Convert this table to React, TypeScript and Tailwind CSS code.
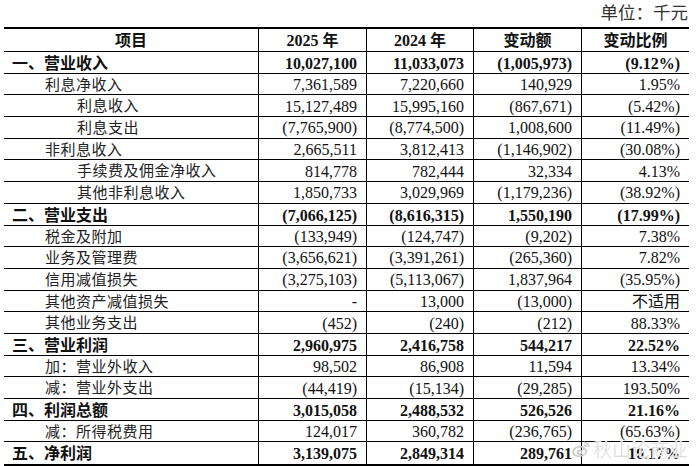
import React from 'react';

type Row = {
  label: string;
  level: 0 | 1 | 2;
  values: [string, string, string, string];
};

const rows: Row[] = [
  { label: '一、营业收入', level: 0, values: ['10,027,100', '11,033,073', '(1,005,973)', '(9.12%)'] },
  { label: '利息净收入', level: 1, values: ['7,361,589', '7,220,660', '140,929', '1.95%'] },
  { label: '利息收入', level: 2, values: ['15,127,489', '15,995,160', '(867,671)', '(5.42%)'] },
  { label: '利息支出', level: 2, values: ['(7,765,900)', '(8,774,500)', '1,008,600', '(11.49%)'] },
  { label: '非利息收入', level: 1, values: ['2,665,511', '3,812,413', '(1,146,902)', '(30.08%)'] },
  { label: '手续费及佣金净收入', level: 2, values: ['814,778', '782,444', '32,334', '4.13%'] },
  { label: '其他非利息收入', level: 2, values: ['1,850,733', '3,029,969', '(1,179,236)', '(38.92%)'] },
  { label: '二、营业支出', level: 0, values: ['(7,066,125)', '(8,616,315)', '1,550,190', '(17.99%)'] },
  { label: '税金及附加', level: 1, values: ['(133,949)', '(124,747)', '(9,202)', '7.38%'] },
  { label: '业务及管理费', level: 1, values: ['(3,656,621)', '(3,391,261)', '(265,360)', '7.82%'] },
  { label: '信用减值损失', level: 1, values: ['(3,275,103)', '(5,113,067)', '1,837,964', '(35.95%)'] },
  { label: '其他资产减值损失', level: 1, values: ['-', '13,000', '(13,000)', '不适用'] },
  { label: '其他业务支出', level: 1, values: ['(452)', '(240)', '(212)', '88.33%'] },
  { label: '三、营业利润', level: 0, values: ['2,960,975', '2,416,758', '544,217', '22.52%'] },
  { label: '加：营业外收入', level: 1, values: ['98,502', '86,908', '11,594', '13.34%'] },
  { label: '减：营业外支出', level: 1, values: ['(44,419)', '(15,134)', '(29,285)', '193.50%'] },
  { label: '四、利润总额', level: 0, values: ['3,015,058', '2,488,532', '526,526', '21.16%'] },
  { label: '减：所得税费用', level: 1, values: ['124,017', '360,782', '(236,765)', '(65.63%)'] },
  { label: '五、净利润', level: 0, values: ['3,139,075', '2,849,314', '289,761', '10.17%'] },
];

const grid = 'grid grid-cols-[254px_108px_107px_108px_108px]';
const font = { fontFamily: '"Liberation Serif", "Noto Sans CJK SC", serif' };

const WeiboMark: React.FC = () => (
  <svg width="20" height="20" viewBox="0 0 20 20" fill="none" stroke="#c8c8c8" strokeWidth="1.6">
    <path d="M8 7.5c-3.5 0.8-6.5 3.6-6 6.2 0.5 2.6 4 4 7.6 3.3 3.6-0.7 6-3 5.6-5.2-0.3-1.6-2-2-2.6-1.6 0.6-1.4 0.2-2.4-1.2-2.4-1 0-2 0.4-2.6 0.9 0.4-1-0.2-1.6-0.8-1.2z" />
    <circle cx="8.6" cy="13.2" r="2" />
    <path d="M13 3.2a4.6 4.6 0 0 1 4.6 5" />
    <path d="M13 6a2 2 0 0 1 2 2" />
  </svg>
);

export default function App() {
  return (
    <div className="relative w-[700px] h-[466px] bg-white text-[#111] overflow-hidden" style={font}>
      <div className="h-[27px] flex items-center justify-end pr-[12px] text-[17.5px] text-[#333]">
        单位：千元
      </div>

      <div className="ml-[4px] w-[685px] border-t-2 border-b-2 border-black">
        <div className={`${grid} h-[23px] border-b-[1.5px] border-black font-bold text-[16px]`}>
          <div className="flex items-center justify-center">项目</div>
          <div className="flex items-center justify-center border-l border-black">2025 年</div>
          <div className="flex items-center justify-center border-l border-black">2024 年</div>
          <div className="flex items-center justify-center border-l border-black">变动额</div>
          <div className="flex items-center justify-center border-l border-black">变动比例</div>
        </div>

        {rows.map((row, i) => {
          const bold = row.level === 0;
          const pad = row.level === 0 ? 'pl-[8px]' : row.level === 1 ? 'pl-[41px]' : 'pl-[73px]';
          const last = i === rows.length - 1;
          return (
            <div
              key={row.label}
              className={`${grid} h-[21.7px] ${last ? '' : 'border-b border-black'} ${bold ? 'font-bold' : ''}`}
            >
              <div
                className={`flex items-center ${pad} ${
                  bold ? 'text-[16px]' : 'text-[15px] tracking-[0.5px] text-[#222]'
                }`}
              >
                {row.label}
              </div>
              {row.values.map((v, j) => (
                <div
                  key={j}
                  className="flex items-center justify-end pr-[9px] border-l border-black text-[16px] leading-none"
                >
                  {v}
                </div>
              ))}
            </div>
          );
        })}
      </div>

      <div className="absolute right-[12px] bottom-[3px] flex items-center gap-[2px] text-[19px] text-[#d0d0d0] pointer-events-none" style={{ fontFamily: '"Noto Sans CJK SC", sans-serif', WebkitTextStroke: '0.5px #ffffff' }}>
        <WeiboMark />
        <span>秋山论商业</span>
      </div>
    </div>
  );
}
